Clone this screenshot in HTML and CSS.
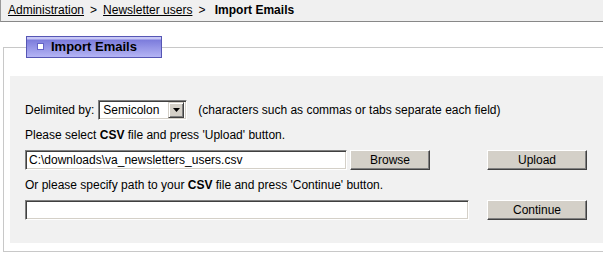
FILE: index.html
```html
<!DOCTYPE html>
<html lang="en">
<head>
    <meta charset="UTF-8">
    <title>Import Emails - Newsletter users</title>
    <link rel="stylesheet" href="styles.css">
</head>
<body>
    <div class="crumbs">
        <a href="#">Administration</a><span class="sep">&gt;</span><a href="#">Newsletter users</a><span class="sep">&gt;</span>&nbsp;<b>Import Emails</b>
    </div>

    <fieldset class="block">
        <legend class="block-title"><span class="block-icon"></span>Import Emails</legend>

        <div class="panel">
            <div class="row">
                <span>Delimited by:</span>
                <div class="select">
                    <span class="select-value">Semicolon</span>
                    <span class="select-btn">
                        <svg width="7" height="4" viewBox="0 0 7 4"><path d="M0 0h7L3.5 4z" fill="#000"/></svg>
                    </span>
                </div>
                <span class="hint">(characters such as commas or tabs separate each field)</span>
            </div>

            <div class="row"><span>Please select <b>CSV</b> file and press 'Upload' button.</span></div>

            <div class="row">
                <div class="row-main">
                    <input class="text file-path" type="text" value="C:\downloads\va_newsletters_users.csv">
                    <button class="button browse">Browse</button>
                </div>
                <button class="button">Upload</button>
            </div>

            <div class="row"><span>Or please specify path to your <b>CSV</b> file and press 'Continue' button.</span></div>

            <div class="row">
                <div class="row-main">
                    <input class="text server-path" type="text" value="">
                </div>
                <button class="button">Continue</button>
            </div>
        </div>
    </fieldset>
</body>
</html>
```

FILE: styles.css
```css
body {
    margin: 0;
    font-family: "Liberation Sans", Arial, sans-serif;
    font-size: 12px;
    color: #000;
    background: #fff;
}
.crumbs {
    height: 21px;
    line-height: 21px;
    padding-left: 7px;
    background-color: #f0f0f0;
    border-left: 1px solid #999;
    border-bottom: 1px solid #888;
    white-space: nowrap;
}
.crumbs a {
    color: #000;
}
.crumbs .sep {
    padding: 0 6px;
}
.block {
    margin: 14px 0 0 3px;
    padding: 0 0 8px 6px;
    border: 1px solid #c8c8c8;
    border-right: none;
    min-width: 0;
}
.block-title {
    box-sizing: border-box;
    width: 136px;
    height: 22px;
    margin-left: 16px;
    padding: 0 0 0 10px;
    line-height: 20px;
    font-size: 13px;
    font-weight: bold;
    border: 1px solid #5656b4;
    background: linear-gradient(#c8c8f6 0, #c8c8f6 2px, #7c7cdc 3px, #b4b4f4 100%);
    white-space: nowrap;
}
.block-icon {
    display: inline-block;
    box-sizing: border-box;
    width: 7px;
    height: 7px;
    margin-right: 7px;
    vertical-align: 1px;
    background: #fff;
    border: 1px solid #6464c8;
}
.panel {
    margin-top: 18px;
    padding: 21px 0 21px 15px;
    background-color: #f1f1f1;
}
.row {
    display: flex;
    align-items: center;
    height: 25px;
    white-space: nowrap;
}
.row-main {
    display: flex;
    align-items: center;
    width: 462px;
}
.select {
    display: flex;
    align-items: center;
    box-sizing: border-box;
    width: 89px;
    height: 20px;
    margin-left: 4px;
    padding-right: 2px;
    background: #fff;
    border-top: 1px solid #808080;
    border-left: 1px solid #808080;
    border-right: 1px solid #fff;
    border-bottom: 1px solid #fff;
    box-shadow: inset 1px 1px #404040, inset -1px -1px #d4d0c8;
}
.select-value {
    flex: 1;
    padding-left: 4px;
}
.select-btn {
    display: flex;
    align-items: center;
    justify-content: center;
    box-sizing: border-box;
    width: 16px;
    height: 16px;
    background: #d4d0c8;
    border-top: 1px solid #d4d0c8;
    border-left: 1px solid #d4d0c8;
    border-right: 1px solid #404040;
    border-bottom: 1px solid #404040;
    box-shadow: inset 1px 1px #fff, inset -1px -1px #808080;
}
.hint {
    margin-left: 11px;
}
.text {
    box-sizing: border-box;
    height: 20px;
    margin: 0;
    padding: 0 3px;
    font-family: "Liberation Sans", Arial, sans-serif;
    font-size: 12px;
    color: #000;
    background: #fff;
    border-top: 1px solid #808080;
    border-left: 1px solid #808080;
    border-right: 1px solid #fff;
    border-bottom: 1px solid #fff;
    box-shadow: inset 1px 1px #404040, inset -1px -1px #d4d0c8;
    outline: none;
}
.file-path {
    width: 322px;
}
.server-path {
    width: 444px;
}
.button {
    box-sizing: border-box;
    width: 100px;
    height: 20px;
    margin: 0;
    padding: 0;
    font-family: "Liberation Sans", Arial, sans-serif;
    font-size: 12px;
    color: #000;
    background: #d4d0c8;
    border-top: 1px solid #fff;
    border-left: 1px solid #fff;
    border-right: 1px solid #404040;
    border-bottom: 1px solid #404040;
    box-shadow: inset -1px -1px #808080;
    cursor: pointer;
}
.browse {
    width: 80px;
    margin-left: 3px;
}
```
